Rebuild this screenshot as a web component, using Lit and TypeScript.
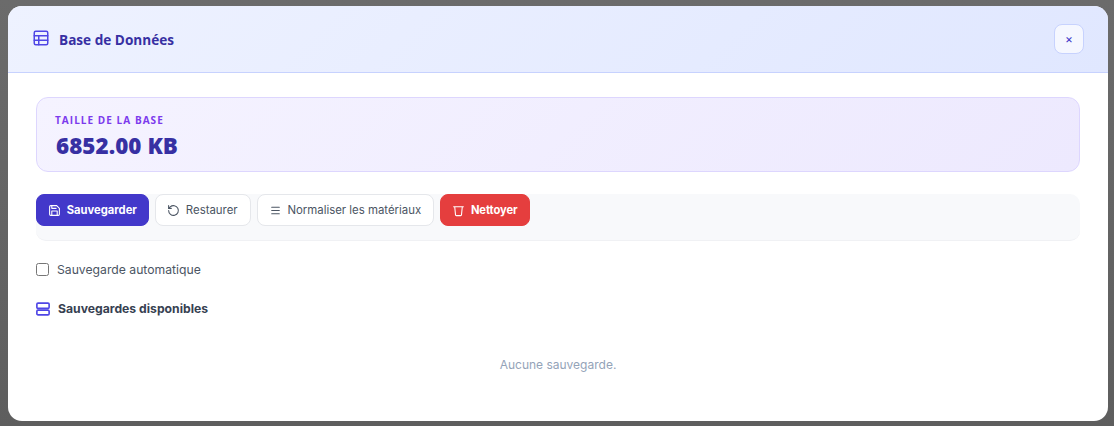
import { LitElement, html, css } from "lit";
import { customElement } from "lit/decorators.js";

@customElement("app-root")
export class AppRoot extends LitElement {
  static styles = css`
    :host {
      display: block;
      width: 1114px;
      height: 426px;
      overflow: hidden;
      font-family: Inter, "Liberation Sans", sans-serif;
    }
    .backdrop {
      height: 100%;
      box-sizing: border-box;
      padding: 6px 6px 5px 8px;
      background: linear-gradient(180deg, #6b6b6b, #5e5e5e);
    }
    .modal {
      height: 100%;
      background: #fff;
      border-radius: 14px;
      overflow: hidden;
    }
    .header {
      height: 67px;
      box-sizing: border-box;
      display: flex;
      align-items: center;
      padding: 0 24px 0 23.5px;
      gap: 9.5px;
      background: linear-gradient(135deg, #eef2ff, #e0e7ff);
      border-bottom: 1px solid #c7d2fe;
    }
    .header svg {
      color: #4f46e5;
      margin-top: -2px;
    }
    .title {
      flex: 1;
      font-family: "Open Sans", sans-serif;
      font-size: 13.6px;
      font-weight: 700;
      color: #3730a3;
    }
    .close {
      width: 30px;
      height: 30px;
      padding: 0 0 2px;
      border: 1px solid #c7d2fe;
      border-radius: 8px;
      background: #f5f7ff;
      color: #4338ca;
      font-size: 12px;
      font-family: inherit;
    }
    .body {
      padding: 24px 28px;
    }
    .size {
      height: 75px;
      box-sizing: border-box;
      padding: 15px 18px;
      border: 1px solid #ddd6fe;
      border-radius: 12px;
      background: linear-gradient(135deg, #f5f3ff, #ede9fe);
    }
    .size-label {
      font-family: "Open Sans", sans-serif;
      font-size: 10px;
      line-height: 14px;
      font-weight: 700;
      letter-spacing: 1.05px;
      color: #7c3aed;
    }
    .size-value {
      margin-top: 4px;
      padding-left: 1px;
      font-family: "Open Sans", sans-serif;
      font-size: 22.4px;
      line-height: 30px;
      font-weight: 800;
      letter-spacing: 0.05px;
      color: #3730a3;
    }
    .toolbar {
      height: 47px;
      box-sizing: border-box;
      margin-top: 22px;
      display: flex;
      align-items: flex-start;
      gap: 6px;
      background: #f8f9fb;
      border-bottom: 1px solid #f0f1f4;
      border-radius: 10px;
    }
    .btn {
      height: 32px;
      box-sizing: border-box;
      display: flex;
      align-items: center;
      gap: 5.6px;
      padding: 0 12px 0 11.2px;
      border: 1px solid #e5e7eb;
      border-radius: 8px;
      background: #fff;
      color: #4b5563;
      font-family: inherit;
      font-size: 11.4px;
      font-weight: 400;
    }
    .btn.primary {
      padding-right: 11.2px;
      background: #4338ca;
      border-color: #4338ca;
      color: #fff;
      font-size: 11.2px;
      font-weight: 700;
    }
    .btn.danger {
      padding-right: 11.2px;
      background: #e53e3e;
      border-color: #e53e3e;
      color: #fff;
      font-size: 11.2px;
      font-weight: 700;
      letter-spacing: -0.1px;
    }
    .auto {
      margin-top: 21px;
      display: flex;
      align-items: center;
      gap: 8px;
      font-size: 12.2px;
      color: #4b5563;
    }
    .check {
      width: 13px;
      height: 13px;
      box-sizing: border-box;
      border: 1px solid #767676;
      border-radius: 2.5px;
      background: #fff;
    }
    .section {
      margin-top: 24px;
      display: flex;
      align-items: center;
      gap: 8px;
      font-size: 12.2px;
      font-weight: 700;
      color: #374151;
    }
    .section svg {
      color: #4f46e5;
    }
    .empty {
      margin-top: 41px;
      text-align: center;
      font-size: 12px;
      color: #94a3b8;
    }
  `;

  render() {
    return html`<div class="backdrop">
      <section class="modal">
        <header class="header">
          <svg width="18" height="18" viewBox="0 0 24 24" fill="none" stroke="currentColor" stroke-width="2" stroke-linecap="round" stroke-linejoin="round">
            <rect x="3" y="3" width="18" height="18" rx="2"></rect>
            <path d="M3 9h18M3 15h18M9 9v12"></path>
          </svg>
          <div class="title">Base de Données</div>
          <button class="close">×</button>
        </header>
        <div class="body">
          <div class="size">
            <div class="size-label">TAILLE DE LA BASE</div>
            <div class="size-value">6852.00 KB</div>
          </div>
          <div class="toolbar">
            <button class="btn primary">
              <svg width="13" height="13" viewBox="0 0 24 24" fill="none" stroke="currentColor" stroke-width="2" stroke-linecap="round" stroke-linejoin="round">
                <path d="M19 21H5a2 2 0 0 1-2-2V5a2 2 0 0 1 2-2h11l5 5v11a2 2 0 0 1-2 2z"></path>
                <path d="M17 21v-8H7v8M7 3v5h8"></path>
              </svg>
              Sauvegarder
            </button>
            <button class="btn">
              <svg width="13" height="13" viewBox="0 0 24 24" fill="none" stroke="currentColor" stroke-width="2" stroke-linecap="round" stroke-linejoin="round">
                <path d="M3 12a9 9 0 1 0 3-6.7L3 8"></path>
                <path d="M3 3v5h5"></path>
              </svg>
              Restaurer
            </button>
            <button class="btn">
              <svg width="13" height="13" viewBox="0 0 24 24" fill="none" stroke="currentColor" stroke-width="2" stroke-linecap="round">
                <path d="M5 6h14M5 12h14M5 18h14"></path>
              </svg>
              Normaliser les matériaux
            </button>
            <button class="btn danger">
              <svg width="13" height="13" viewBox="0 0 24 24" fill="none" stroke="currentColor" stroke-width="2" stroke-linecap="round" stroke-linejoin="round">
                <path d="M3 5h18M5 5l1.5 15a1.5 1.5 0 0 0 1.5 1.5h8a1.5 1.5 0 0 0 1.5-1.5L19 5"></path>
              </svg>
              Nettoyer
            </button>
          </div>
          <label class="auto"><span class="check"></span>Sauvegarde automatique</label>
          <div class="section">
            <svg width="14" height="14" viewBox="0 0 24 24" fill="none" stroke="currentColor" stroke-width="2.8" stroke-linecap="round" stroke-linejoin="round">
              <rect x="1.5" y="2" width="21" height="9" rx="2"></rect>
              <rect x="1.5" y="14" width="21" height="8" rx="2"></rect>
            </svg>
            Sauvegardes disponibles
          </div>
          <div class="empty">Aucune sauvegarde.</div>
        </div>
      </section>
    </div>`;
  }
}
